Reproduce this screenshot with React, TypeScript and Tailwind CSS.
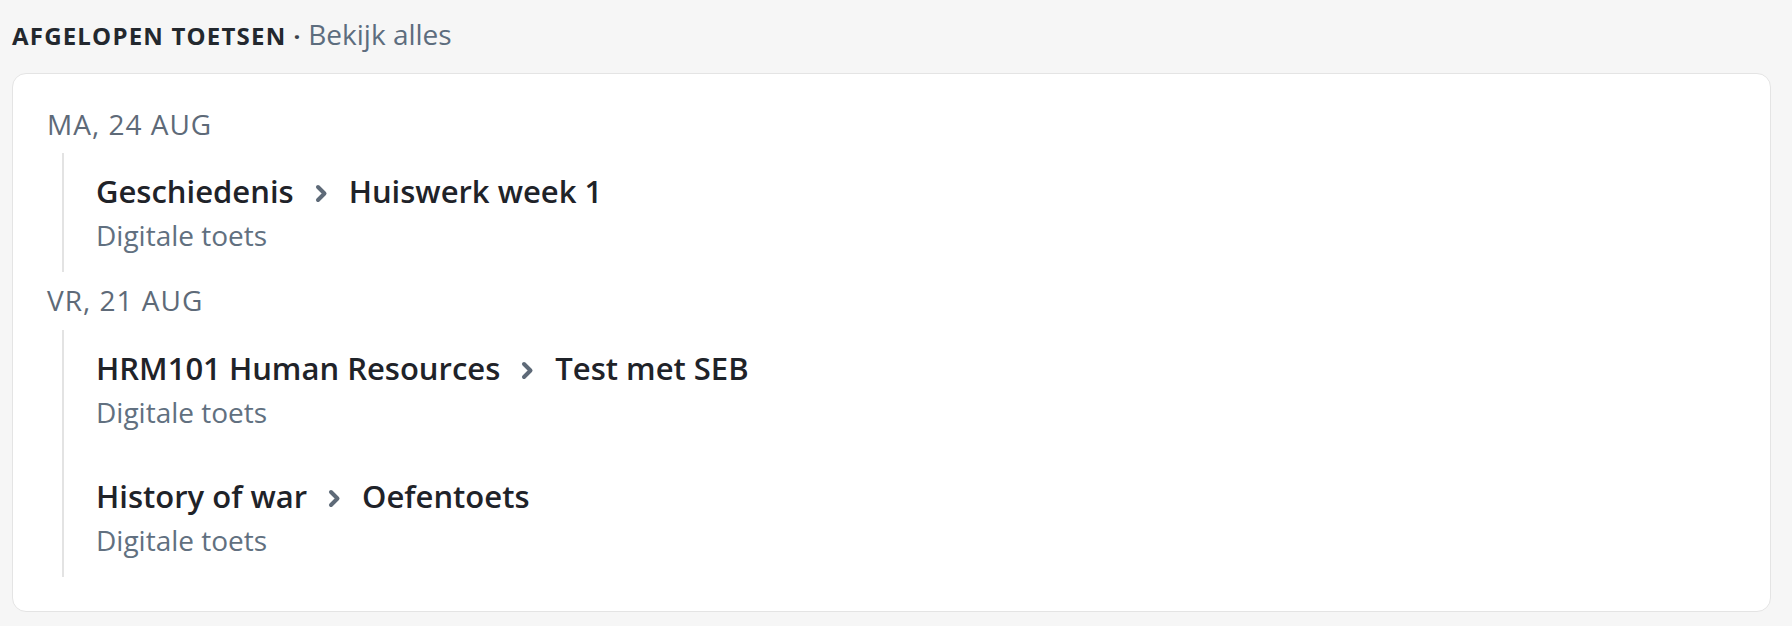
import React from "react";

const font = { fontFamily: '"Open Sans", "Liberation Sans", sans-serif' };

function Chevron() {
  return (
    <svg width="13" height="19" viewBox="0 0 13 19" className="shrink-0 mt-[4px]" aria-hidden="true">
      <polyline
        points="3,3 9.5,9.5 3,16"
        fill="none"
        stroke="#5e6a78"
        strokeWidth="4"
        strokeLinecap="round"
        strokeLinejoin="round"
      />
    </svg>
  );
}

type Item = { course: string; test: string; kind: string };
type Group = { date: string; items: Item[] };

const groups: Group[] = [
  {
    date: "MA, 24 AUG",
    items: [{ course: "Geschiedenis", test: "Huiswerk week 1", kind: "Digitale toets" }],
  },
  {
    date: "VR, 21 AUG",
    items: [
      { course: "HRM101 Human Resources", test: "Test met SEB", kind: "Digitale toets" },
      { course: "History of war", test: "Oefentoets", kind: "Digitale toets" },
    ],
  },
];

export default function App() {
  return (
    <div className="min-h-[626px] w-full bg-[#f6f6f6] pl-[12px] pr-[21px] pt-[16px]" style={font}>
      <div className="text-[28px] leading-[36px] whitespace-nowrap">
        <span className="text-[24px] font-bold tracking-[1.2px] text-[#23282e]">AFGELOPEN TOETSEN</span>
        <span className="text-[24px] font-bold text-[#3a424b] ml-[7px] mr-[8px]">·</span>
        <span className="text-[#5d6d7e]">Bekijk alles</span>
      </div>
      <div className="mt-[19px] rounded-[14px] border border-[#e4e4e4] bg-white pl-[34px] pt-[32px] pb-[34px]">
        {groups.map((g, gi) => (
          <div key={g.date} className={gi > 0 ? "mt-[10px]" : ""}>
            <div className="text-[28px] leading-[36px] tracking-[1px] text-[#5e6a78]">{g.date}</div>
            <div
              className={
                (gi > 0 ? "mt-[12px] " : "mt-[11px] ") +
                "ml-[15px] border-l-2 border-[#e3e3e3] pl-[32px] flex flex-col gap-[9px]"
              }
            >
              {g.items.map((it) => (
                <div key={it.course} className="pt-[16px] pb-[19px]">
                  <div className="flex items-center gap-[21px] text-[31px] leading-[44px] font-semibold text-[#1f2329]">
                    <span>{it.course}</span>
                    <Chevron />
                    <span>{it.test}</span>
                  </div>
                  <div className="mt-[4px] text-[28px] leading-[36px] text-[#617080]">{it.kind}</div>
                </div>
              ))}
            </div>
          </div>
        ))}
      </div>
    </div>
  );
}
